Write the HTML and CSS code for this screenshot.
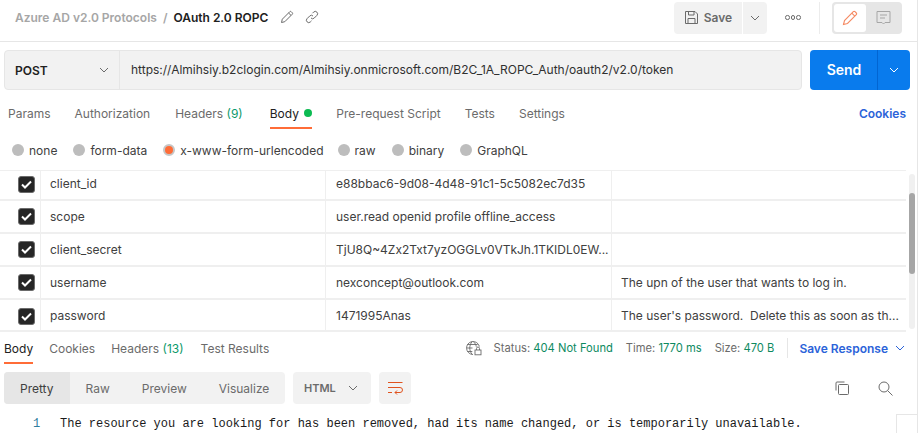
FILE: index.html
```html
<!DOCTYPE html>
<html lang="en">
<head>
<meta charset="utf-8">
<title>OAuth 2.0 ROPC</title>
<link rel="stylesheet" href="styles.css">
</head>
<body>
<div class="app">
  <header class="top">
    <div class="crumbs">
      <span class="crumb-parent">Azure AD v2.0 Protocols</span>
      <span class="crumb-sep">/</span>
      <span class="crumb-current">OAuth 2.0 ROPC</span>
      <svg class="ico crumb-edit" width="14" height="14" viewBox="0 0 14 14" fill="none" stroke="#6b6b6b"><path d="M1.500 12.500l.8-3.300L9.800 1.700a1 1 0 0 1 1.400 0l1.100 1.100a1 1 0 0 1 0 1.400L4.800 11.700z"/><path d="M8.600 3l2.400 2.400"/></svg>
      <svg class="ico crumb-link" width="14" height="14" viewBox="0 0 14 14" fill="none" stroke="#6b6b6b"><path d="M6 8a2.300 2.300 0 0 0 3.300 0l2.600-2.600a2.300 2.300 0 0 0-3.300-3.300L7.500 3.200"/><path d="M8 6a2.300 2.300 0 0 0-3.300 0L2.100 8.600a2.300 2.300 0 0 0 3.300 3.300l1.100-1.100"/></svg>
    </div>
    <div class="actions">
      <div class="save">
        <svg width="15" height="15" viewBox="0 0 15 15" fill="none" stroke="#6b6b6b"><path d="M1.500 1.500h9.500l2.500 2.500v9.500h-12z"/><path d="M4.500 1.500v3.500h5.500v-3.500M4 13.500v-5h7v5"/></svg>
        <span>Save</span>
      </div>
      <div class="save-more"><svg class="chev" width="10" height="6" viewBox="0 0 10 6" fill="none" stroke="#6b6b6b"><path d="M1 1l4 4 4-4"/></svg></div>
      <div class="more"><i></i><i></i><i></i></div>
      <div class="divider"></div>
      <div class="modes">
        <div class="mode mode-on"><svg width="16" height="16" viewBox="0 0 16 16" fill="none" stroke="#f58a63" stroke-width="1.100"><path d="M1.500 14.500l1-4L11.300 1.700a1.200 1.200 0 0 1 1.700 0l1.300 1.300a1.200 1.200 0 0 1 0 1.700L5.500 13.500z"/><path d="M9.800 3.200l3 3"/></svg></div>
        <div class="mode"><svg width="15" height="16" viewBox="0 0 15 16" fill="none" stroke="#a6a6a6"><path d="M1 1.500h13v11H9l-1.500 1.500L6 12.500H1z"/><path d="M4 5h7M4 8h5"/></svg></div>
      </div>
    </div>
  </header>

  <div class="request">
    <div class="urlbar">
      <div class="method"><span>POST</span><svg width="10" height="6" viewBox="0 0 10 6" fill="none" stroke="#6b6b6b"><path d="M1 1l4 4 4-4"/></svg></div>
      <div class="url">https://Almihsiy.b2clogin.com/Almihsiy.onmicrosoft.com/B2C_1A_ROPC_Auth/oauth2/v2.0/token</div>
    </div>
    <div class="send">
      <span class="send-label">Send</span>
      <span class="send-more"><svg width="10" height="6" viewBox="0 0 10 6" fill="none" stroke="#fff"><path d="M1 1l4 4 4-4"/></svg></span>
    </div>
  </div>

  <nav class="tabs">
    <span class="tab t-params">Params</span>
    <span class="tab t-auth">Authorization</span>
    <span class="tab t-head">Headers <em>(9)</em></span>
    <span class="tab tab-on t-body">Body <i class="dot"></i></span>
    <span class="tab t-pre">Pre-request Script</span>
    <span class="tab t-tests">Tests</span>
    <span class="tab">Settings</span>
    <span class="cookies">Cookies</span>
  </nav>

  <div class="radios">
    <label class="radio"><i></i>none</label>
    <label class="radio"><i></i>form-data</label>
    <label class="radio radio-long"><i class="on"></i>x-www-form-urlencoded</label>
    <label class="radio"><i></i>raw</label>
    <label class="radio"><i></i>binary</label>
    <label class="radio"><i></i>GraphQL</label>
  </div>

  <section class="table-wrap">
    <div class="rows">
      <div class="row first"><div class="c-check"><span class="box"><svg width="11" height="9" viewBox="0 0 11 9" fill="none" stroke="#fff" stroke-width="2"><path d="M1 4.500l3 3 6-6"/></svg></span></div><div class="c-key">client_id</div><div class="c-val">e88bbac6-9d08-4d48-91c1-5c5082ec7d35</div><div class="c-desc"></div></div>
      <div class="row"><div class="c-check"><span class="box"><svg width="11" height="9" viewBox="0 0 11 9" fill="none" stroke="#fff" stroke-width="2"><path d="M1 4.500l3 3 6-6"/></svg></span></div><div class="c-key">scope</div><div class="c-val">user.read openid profile offline_access</div><div class="c-desc"></div></div>
      <div class="row"><div class="c-check"><span class="box"><svg width="11" height="9" viewBox="0 0 11 9" fill="none" stroke="#fff" stroke-width="2"><path d="M1 4.500l3 3 6-6"/></svg></span></div><div class="c-key">client_secret</div><div class="c-val">TjU8Q~4Zx2Txt7yzOGGLv0VTkJh.1TKIDL0EW...</div><div class="c-desc"></div></div>
      <div class="row"><div class="c-check"><span class="box"><svg width="11" height="9" viewBox="0 0 11 9" fill="none" stroke="#fff" stroke-width="2"><path d="M1 4.500l3 3 6-6"/></svg></span></div><div class="c-key">username</div><div class="c-val">nexconcept@outlook.com</div><div class="c-desc">The upn of the user that wants to log in.</div></div>
      <div class="row last"><div class="c-check"><span class="box"><svg width="11" height="9" viewBox="0 0 11 9" fill="none" stroke="#fff" stroke-width="2"><path d="M1 4.500l3 3 6-6"/></svg></span></div><div class="c-key">password</div><div class="c-val">1471995Anas</div><div class="c-desc">The user's password.&nbsp; Delete this as soon as th...</div></div>
    </div>
    <div class="scroll"><div class="thumb"></div></div>
  </section>

  <section class="response">
    <div class="res-head">
      <span class="tab tab-on r-body">Body</span>
      <span class="tab r-cookies">Cookies</span>
      <span class="tab r-head">Headers <em>(13)</em></span>
      <span class="tab">Test Results</span>
      <div class="status">
        <svg class="globe" width="17" height="16" viewBox="0 0 17 16" fill="none" stroke="#6b6b6b" stroke-width=".9"><path d="M8 14.500A6.500 6.500 0 1 1 14.400 6.500M1.500 8h6M2.300 4.500h10.400M2.300 11.500h5M7 1.700C4 5.500 4 10.500 7 14.300M8.500 1.700c1.500 1.500 2.500 3 2.800 5"/><rect x="10" y="10" width="6" height="4.800" fill="#fff"/><path d="M11.500 10V8.500a1.500 1.500 0 0 1 3 0V10"/></svg>
        <span class="stat s1">Status: <b>404 Not Found</b></span>
        <span class="stat s2">Time: <b>1770 ms</b></span>
        <span class="stat">Size: <b>470 B</b></span>
        <span class="res-div"></span>
        <span class="save-res">Save Response</span>
        <svg width="10" height="6" viewBox="0 0 10 6" fill="none" stroke="#2b63d9"><path d="M1 1l4 4 4-4"/></svg>
      </div>
    </div>
    <div class="toolbar">
      <div class="views">
        <span class="view view-on">Pretty</span>
        <span class="view">Raw</span>
        <span class="view">Preview</span>
        <span class="view">Visualize</span>
      </div>
      <div class="lang"><span>HTML</span><svg width="10" height="6" viewBox="0 0 10 6" fill="none" stroke="#6b6b6b"><path d="M1 1l4 4 4-4"/></svg></div>
      <div class="wrap"><svg width="15" height="14" viewBox="0 0 15 14" fill="none" stroke="#e0531f"><path d="M0 1.500h14.500M0 6.500h12a2.400 2.400 0 0 1 0 5H7M9 9.500l-2 2 2 2M0 11.500h4"/></svg></div>
      <div class="tools">
        <svg width="14" height="14" viewBox="0 0 14 14" fill="none" stroke="#6b6b6b"><path d="M1 9.500V2a1 1 0 0 1 1-1h7.500"/><rect x="3.500" y="3.500" width="10" height="10" rx="1"/></svg>
        <svg width="15" height="15" viewBox="0 0 15 15" fill="none" stroke="#6b6b6b"><circle cx="6" cy="6" r="5"/><path d="M9.700 9.700l4.800 4.800"/></svg>
      </div>
    </div>
    <div class="code"><span class="ln">1</span><code>The resource you are looking for has been removed, had its name changed, or is temporarily unavailable.</code></div>
  </section>
  <div class="minimap"></div>
</div>
</body>
</html>
```
FILE: styles.css
```css
* { box-sizing: border-box; }
html, body { margin: 0; height: 100%; background: #fff; overflow: hidden; }
body { font-family: Inter, "Liberation Sans", sans-serif; font-size: 12px; color: #212121; }
.app { position: relative; width: 918px; height: 433px; border-right: 1px solid #e6e6e6; }
em { font-style: normal; }

.top { height: 42px; border-bottom: 1px solid #e6e6e6; display: flex; justify-content: space-between; align-items: flex-start; }
.crumbs { display: flex; align-items: center; height: 34px; padding-left: 15px; font-weight: 600; }
.crumb-parent { color: #a6a6a6; }
.crumb-sep { color: #a6a6a6; margin: 0 6px 0 6px; }
.crumb-current { color: #212121; }
.crumb-edit { margin-left: 12px; }
.crumb-link { margin-left: 11px; }
.actions { display: flex; align-items: center; height: 33px; margin-top: 1px; padding-right: 15px; }
.save { width: 68px; height: 32px; background: #f2f2f2; border-radius: 4px 0 0 4px; display: flex; align-items: center; justify-content: center; gap: 5px; color: #6b6b6b; font-weight: 600; font-size: 12px; }
.save-more { width: 24px; height: 32px; margin-left: 1px; background: #f2f2f2; border-radius: 0 4px 4px 0; display: flex; align-items: center; justify-content: center; }
.more { width: 52px; display: flex; justify-content: center; gap: 1px; }
.more i { width: 4.500px; height: 4.500px; border: 1px solid #6b6b6b; border-radius: 50%; }
.divider { width: 1px; height: 32px; background: #ececec; margin-right: 12px; }
.modes { width: 70px; height: 32px; background: #e6e6e6; border-radius: 4px; padding: 2px; display: flex; align-items: center; }
.mode { width: 32px; height: 28px; display: flex; align-items: center; justify-content: center; }
.mode + .mode { margin-left: 1px; }
.mode-on { background: #fff; border-radius: 3px; }

.request { display: flex; padding: 8px 7px 0 4px; gap: 8px; height: 48px; }
.urlbar { flex: 1; height: 40px; display: flex; background: #f2f2f2; border: 1px solid #e6e6e6; border-radius: 4px; }
.method { width: 115px; border-right: 1px solid #e6e6e6; display: flex; align-items: center; justify-content: space-between; padding: 0 10px 0 10px; font-weight: 600; color: #212121; }
.url { flex: 1; padding: 0 0 0 11px; line-height: 37px; white-space: nowrap; overflow: hidden; color: #303030; }
.send { width: 100px; height: 40px; background: #097bed; border-radius: 4px; color: #fff; display: flex; }
.send-label { flex: 1; text-align: center; font-weight: 600; font-size: 14px; line-height: 40px; padding-left: 1px; }
.send-more { width: 33px; border-left: 1px solid #0265d2; display: flex; align-items: center; justify-content: center; }

.tabs { height: 40px; display: flex; padding: 7px 8px 1px; align-items: stretch; color: #6b6b6b; }
.tab { display: inline-flex; align-items: center; height: 100%; white-space: pre; color: #6b6b6b; }
.tab em { color: #0d9a6b; }
.tab-on { color: #212121; box-shadow: inset 0 -2px 0 #ff6c37; }
.t-params { margin-right: 24px; }
.t-auth { margin-right: 25px; }
.t-head { margin-right: 27px; }
.t-body { margin-right: 24px; }
.t-pre { margin-right: 24px; }
.t-tests { margin-right: 24px; }
.dot { width: 8px; height: 8px; border-radius: 50%; background: #0cbb52; margin-left: 2px; }
.cookies { margin-left: auto; color: #2b63d9; font-weight: 600; align-self: center; margin-right: 3px; }

.radios { height: 40px; padding: 0 0 0 12px; display: flex; align-items: center; gap: 16px; color: #404040; }
.radio { display: inline-flex; align-items: center; gap: 5px; }
.radio-long { margin-right: -2px; }
.radio i { width: 12px; height: 12px; border-radius: 50%; background: #bdbdbd; display: block; }
.radio i.on { background: #ff6c37; border: 2px solid #c6c6c6; }

.table-wrap { height: 162px; display: flex; }
.rows { width: 906px; }
.row { display: flex; height: 33px; border-bottom: 2px solid #efefef; line-height: 31px; color: #404040; }
.row.first { height: 31px; border-top: 1px solid #efefef; line-height: 26px; }
.row.first .c-check { padding-bottom: 2px; }
.row.last { height: 32px; line-height: 32px; }
.row.last .c-check { padding-top: 2px; }
.row > div { white-space: nowrap; overflow: hidden; }
.c-check { width: 41px; border-right: 1px solid #efefef; display: flex; align-items: center; justify-content: flex-end; padding-right: 5px; }
.box { width: 17px; height: 17px; background: #262626; border: 1px solid #6b6b6b; border-radius: 3px; display: flex; align-items: center; justify-content: center; }
.c-key { width: 285px; padding-left: 9px; border-right: 1px solid #efefef; }
.c-val { width: 286px; padding-left: 10px; border-right: 1px solid #efefef; }
.c-desc { flex: 1; padding-left: 9px; }
.scroll { width: 6px; height: 155px; margin: 4px 0 0 3px; background: #f0f0f0; border-radius: 3px; padding-top: 19px; }
.thumb { height: 81px; background: #a6a6a6; border-radius: 3px; }

.response { height: 101px; }
.res-head { height: 32px; display: flex; padding-left: 4px; align-items: stretch; }
.r-body { margin-right: 16px; }
.r-cookies { margin-right: 16px; }
.r-head { margin-right: 17px; }
.status { margin-left: auto; display: flex; align-items: center; font-size: 11.2px; padding-right: 12px; }
.globe { margin-right: 12px; }
.stat { color: #6b6b6b; }
.stat b { font-weight: 400; color: #0d8a5f; }
.s1 { margin-right: 13px; }
.s2 { margin-right: 13px; }
.res-div { width: 1px; height: 20px; background: #e6e6e6; margin: 0 11px 0 13px; }
.save-res { color: #2b63d9; font-weight: 600; font-size: 12px; margin-right: 7px; }

.toolbar { display: flex; height: 32px; margin-top: 8px; padding-left: 4px; }
.views { width: 281px; background: #f2f2f2; border-radius: 4px; display: flex; overflow: hidden; color: #6b6b6b; }
.view { display: flex; align-items: center; padding: 0 16px; }
.view-on { width: 66px; background: #e6e6e6; color: #404040; }
.lang { width: 78px; margin-left: 8px; background: #f2f2f2; border-radius: 4px; display: flex; align-items: center; justify-content: space-between; padding: 0 13px 0 11px; color: #6b6b6b; font-weight: 600; font-size: 11px; }
.wrap { width: 32px; margin-left: 8px; background: #f2f2f2; border-radius: 4px; display: flex; align-items: center; justify-content: center; }
.tools { margin-left: auto; width: 82px; padding-right: 24px; display: flex; align-items: center; justify-content: space-between; }

.code { display: flex; margin-top: 10px; height: 19px; align-items: center; font-family: "Liberation Mono", monospace; font-size: 12px; padding-left: 33px; white-space: pre; }
.ln { width: 27px; color: #2f7d9e; }
code { font: inherit; color: #1a1a1a; }
.minimap { position: absolute; left: 896px; top: 414px; width: 21px; height: 19px; border-left: 1px solid #e6e6e6; border-top: 1px solid #e6e6e6; }
```
